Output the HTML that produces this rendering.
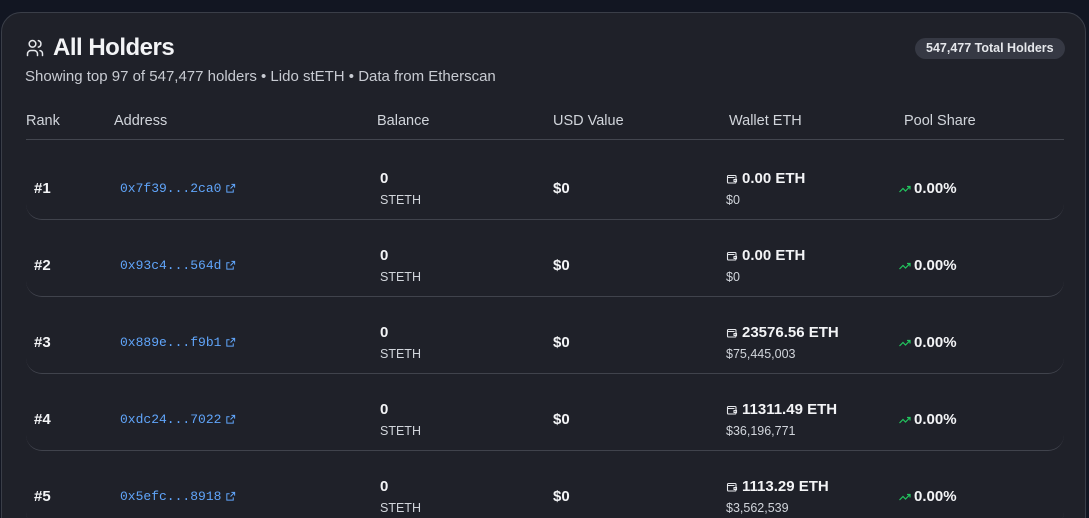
<!DOCTYPE html>
<html><head><style>
*{margin:0;padding:0;box-sizing:border-box}
html,body{width:1089px;height:518px;overflow:hidden}
body{background:#121622;font-family:"Liberation Sans",sans-serif;color:#f3f4f6;position:relative}
.card{position:absolute;left:1px;top:12px;width:1085px;height:530px;background:#1f2129;border:1px solid #3a3e48;border-radius:20px}
.title{position:absolute;left:25px;top:34px;font-size:24px;font-weight:bold;letter-spacing:-0.5px;display:flex;align-items:center;gap:8px}
.sub{position:absolute;left:25px;top:68px;font-size:15px;color:#c8cbd2}
.badge{position:absolute;left:915px;top:38px;height:21px;padding:0 11px;background:#363944;border-radius:11px;font-size:12.5px;font-weight:bold;line-height:21px;color:#e5e7eb}
.hdr{position:absolute;top:113px;font-size:14.5px;color:#d1d5db}
.hline{position:absolute;left:26px;top:139px;width:1038px;height:1px;background:#43464f}
.row{position:absolute;left:26px;width:1038px;height:77px;border-bottom:1px solid #40434c;border-radius:0 0 16px 16px}
.c{position:absolute}
.rank{left:8px;top:37px;font-size:15px;font-weight:bold}
.addr{left:94px;top:38px;font-family:"Liberation Mono",monospace;font-size:13px;color:#60a5fa;display:flex;align-items:center;gap:4px}
.bal{left:354px;top:27px;font-size:15px;font-weight:bold}
.unit{left:354px;top:50px;font-size:12.5px;color:#d1d5db}
.usd{left:527px;top:37px;font-size:15px;font-weight:bold}
.eth{left:700px;top:27px;font-size:15px;font-weight:bold;display:flex;align-items:center;gap:4px}
.ethu{left:700px;top:50px;font-size:12.5px;color:#d1d5db}
.pool{left:873px;top:37px;font-size:15px;font-weight:bold;display:flex;align-items:center;gap:3px}
</style></head><body>
<div class="card"></div>
<div class="title"><svg width="20" height="20" viewBox="0 0 24 24" fill="none" stroke="#e5e7eb" stroke-width="1.8" stroke-linecap="round"><circle cx="9" cy="7" r="4"/><path d="M3 21v-2a4 4 0 0 1 4-4h4a4 4 0 0 1 4 4v2"/><path d="M16 3.1a4 4 0 0 1 0 7.8M21 21v-2a4 4 0 0 0-3-3.9"/></svg>All Holders</div>
<div class="sub">Showing top 97 of 547,477 holders • Lido stETH • Data from Etherscan</div>
<div class="badge">547,477 Total Holders</div>
<div class="hdr" style="left:26px">Rank</div>
<div class="hdr" style="left:114px">Address</div>
<div class="hdr" style="left:377px">Balance</div>
<div class="hdr" style="left:553px">USD Value</div>
<div class="hdr" style="left:729px">Wallet ETH</div>
<div class="hdr" style="left:904px">Pool Share</div>
<div class="hline"></div>

<div id="rows"></div>
<script>
var d=[["#1","0x7f39...2ca0","0.00 ETH","$0"],["#2","0x93c4...564d","0.00 ETH","$0"],["#3","0x889e...f9b1","23576.56 ETH","$75,445,003"],["#4","0xdc24...7022","11311.49 ETH","$36,196,771"],["#5","0x5efc...8918","1113.29 ETH","$3,562,539"]];
var ext='<svg width="11" height="11" viewBox="0 0 24 24" fill="none" stroke="#60a5fa" stroke-width="2.2"><path d="M14 3h7v7M21 3l-9 9M18 14v6H4V6h6"/></svg>';
var wal='<svg width="12" height="12" viewBox="0 0 24 24" fill="none" stroke="#e5e7eb" stroke-width="2.2"><rect x="3" y="5" width="17" height="15" rx="2"/><path d="M3 9h14M16 13h5v4h-5z"/></svg>';
var tr='<svg width="12" height="10" viewBox="0 0 24 20" fill="none" stroke="#22c55e" stroke-width="2.4"><path d="M1 16l7-7 5 5 9-9M16 5h6v6"/></svg>';
var h='';
d.forEach(function(r,i){h+='<div class="row" style="top:'+(143+77*i)+'px"><div class="c rank">'+r[0]+'</div><div class="c addr">'+r[1]+ext+'</div><div class="c bal">0</div><div class="c unit">STETH</div><div class="c usd">$0</div><div class="c eth">'+wal+r[2]+'</div><div class="c ethu">'+r[3]+'</div><div class="c pool">'+tr+'0.00%</div></div>';});
document.getElementById('rows').innerHTML=h;
</script>
</body></html>
